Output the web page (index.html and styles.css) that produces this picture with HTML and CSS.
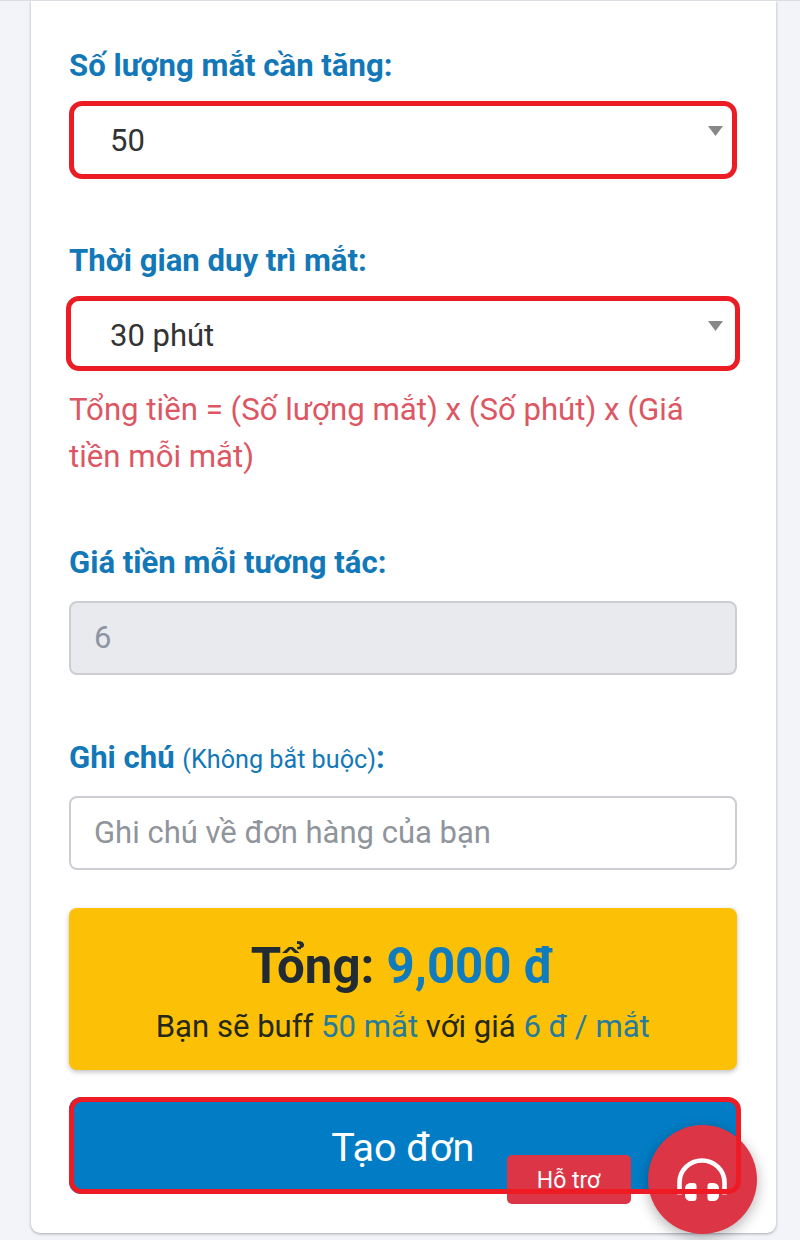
FILE: index.html
```
<!DOCTYPE html>
<html lang="vi">
<head>
  <meta charset="UTF-8" />
  <title>Tạo đơn</title>
  <meta name="viewport" content="width=device-width, initial-scale=1.0" />
  <link rel="stylesheet" href="styles.css">
</head>
<body>
  <form class="card">
    <div class="form-group">
      <label class="label">Số lượng mắt cần tăng:</label>
      <div class="select select-amount">
        <span>50</span>
        <svg class="arrow" width="15" height="10" viewBox="0 0 15 10"><path d="M0 0h15L7.5 10z" fill="#888"/></svg>
      </div>
    </div>

    <div class="form-group">
      <label class="label">Thời gian duy trì mắt:</label>
      <div class="select select-time">
        <span>30 phút</span>
        <svg class="arrow" width="15" height="10" viewBox="0 0 15 10"><path d="M0 0h15L7.5 10z" fill="#888"/></svg>
      </div>
      <p class="help">Tổng tiền = (Số lượng mắt) x (Số phút) x (Giá tiền mỗi mắt)</p>
    </div>

    <div class="form-group">
      <label class="label" for="price">Giá tiền mỗi tương tác:</label>
      <input class="input" id="price" type="text" value="6" disabled>
    </div>

    <div class="form-group">
      <label class="label" for="note">Ghi chú <small>(Không bắt buộc)</small>:</label>
      <input class="input" id="note" type="text" placeholder="Ghi chú về đơn hàng của bạn">
    </div>

    <div class="total">
      <h2 class="total-title">Tổng: <span>9,000 đ</span></h2>
      <p class="total-text">Bạn sẽ buff <span>50 mắt</span> với giá <span>6 đ / mắt</span></p>
    </div>

    <div class="submit">
      <button type="button" class="submit-btn">Tạo đơn</button>
      <div class="submit-outline"></div>
    </div>
  </form>

  <div class="support">
    <span class="support-label">Hỗ trợ</span>
    <span class="support-btn">
      <svg width="50" height="44" viewBox="0 0 50 44">
        <path d="M2.5 36.6V24.5a22.5 22 0 0 1 45 0V36.6" fill="none" stroke="#fff" stroke-width="4.6"/>
        <path d="M13.5 25h3a3 3 0 0 1 3 3v12a3 3 0 0 1-3 3h-3a5.5 5.5 0 0 1-5.5-5.5v-7a5.5 5.5 0 0 1 5.5-5.5z" fill="#fff"/>
        <path d="M36.5 25h-3a3 3 0 0 0-3 3v12a3 3 0 0 0 3 3h3a5.5 5.5 0 0 0 5.5-5.5v-7a5.5 5.5 0 0 0-5.5-5.5z" fill="#fff"/>
      </svg>
    </span>
  </div>
</body>
</html>
```
FILE: styles.css
```
* {
  box-sizing: border-box;
}

body {
  margin: 0;
  height: 1240px;
  overflow: hidden;
  position: relative;
  border-top: 1px solid #dcdde2;
  background-color: #f3f4f9;
  font-family: Roboto, sans-serif;
  font-size: 31px;
  color: #333;
}

.card {
  width: 745px;
  height: 1232px;
  margin: 0 0 0 30.5px;
  padding: 42px 39px 0 38.5px;
  background-color: #fff;
  border-radius: 0 0 9px 9px;
  box-shadow: 0 1px 3px rgba(40, 45, 60, 0.38);
}

.form-group {
  margin-bottom: 60px;
}

.label {
  display: block;
  height: 46px;
  line-height: 46px;
  margin-bottom: 12px;
  font-size: 31.1px;
  font-weight: 700;
  color: #1278b8;
  white-space: nowrap;
}

.label small {
  font-size: 25.2px;
  font-weight: 400;
}

.select {
  display: flex;
  justify-content: space-between;
  border: 5px solid #eb1c24;
  border-radius: 13px;
  line-height: 36px;
}

.select-amount {
  height: 78px;
  margin-bottom: -1px;
  padding: 17px 9px 0 36px;
}

.select-time {
  height: 75px;
  margin: 0 -3px;
  padding: 17px 12px 0 39px;
}

.arrow {
  margin-top: 3px;
}

.help {
  margin: 15px 0 60px;
  font-size: 31.2px;
  line-height: 47px;
  color: #dc5763;
}

.input {
  display: block;
  width: 100%;
  height: 74px;
  margin-top: 15px;
  padding: 0 23px 1px;
  border: 2px solid #cdced3;
  border-radius: 8px;
  background-color: #fff;
  font: inherit;
}

.input:disabled {
  background-color: #e9eaee;
  color: #8d95a3;
}

.input::placeholder {
  color: #90949b;
  opacity: 1;
}

.total {
  height: 162px;
  margin-top: -22px;
  padding-top: 23px;
  border-radius: 8px;
  background-color: #fcc106;
  box-shadow: 0 2px 5px rgba(0, 0, 0, 0.25);
  text-align: center;
}

.total-title {
  margin: 0;
  font-size: 49.2px;
  line-height: 70px;
  color: #212b34;
}

.total-title span {
  color: #107bbd;
}

.total-text {
  margin: 0;
  font-size: 31.1px;
  line-height: 51px;
  color: #252819;
}

.total-text span {
  color: #267b9b;
}

.submit {
  position: relative;
  height: 97px;
  margin-top: 27px;
}

.submit-btn {
  width: 100%;
  height: 100%;
  padding: 4px 0 0;
  border: 0;
  border-radius: 12px;
  background-color: #027dc5;
  color: #fff;
  font-family: inherit;
  font-size: 39.5px;
}

/* drawn above the support bubble */
.submit-outline {
  position: absolute;
  z-index: 3;
  top: 0;
  left: 0;
  right: -4px;
  bottom: 0;
  border: 5px solid #ee1b24;
  border-radius: 13px;
}

.support {
  position: absolute;
  z-index: 2;
  right: 43.5px;
  bottom: 6px;
  display: flex;
  align-items: center;
  gap: 17px;
}

.support-label {
  width: 124px;
  height: 49px;
  border-radius: 5px;
  background-color: #dc3646;
  color: #fff;
  font-size: 23px;
  line-height: 52px;
  text-align: center;
}

.support-btn {
  display: flex;
  justify-content: center;
  width: 109px;
  height: 109px;
  padding-top: 33px;
  border-radius: 50%;
  background-color: #dc3646;
  box-shadow: 0 4px 14px rgba(0, 0, 0, 0.3);
}
```
